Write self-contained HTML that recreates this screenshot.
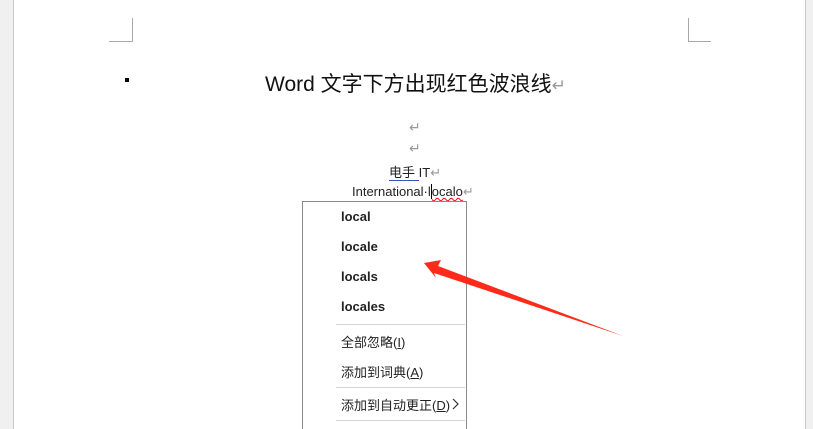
<!DOCTYPE html>
<html style="overflow:hidden;height:429px"><head><meta charset="utf-8"><style>
body{margin:0;width:813px;height:429px;overflow:hidden;background:#fff;position:relative;font-family:"Liberation Sans","Noto Sans CJK SC",sans-serif;}
.g{position:absolute;top:0;height:429px;background:#f0f0f0}
.t{position:absolute;white-space:nowrap;color:#222}
.m{position:absolute;left:341px;font-size:13px;color:#222;white-space:nowrap}
.b{font-weight:bold}
.sep{position:absolute;left:336px;width:129px;height:1px;background:#d5d5d5}
.ret{color:#999}
</style></head><body>
<div class="g" style="left:0;width:13px;border-right:1px solid #c8c8c8"></div>
<div class="g" style="left:805px;width:8px;border-left:1px solid #c8c8c8"></div>
<div style="position:absolute;left:132px;top:18px;width:1px;height:24px;background:#a8a8a8"></div>
<div style="position:absolute;left:109px;top:41px;width:24px;height:1px;background:#a8a8a8"></div>
<div style="position:absolute;left:688px;top:18px;width:1px;height:24px;background:#a8a8a8"></div>
<div style="position:absolute;left:688px;top:41px;width:23px;height:1px;background:#a8a8a8"></div>
<div style="position:absolute;left:125px;top:78px;width:4px;height:4px;background:#000"></div>
<div class="t" style="left:265px;top:68px;font-size:21px;color:#111">Word 文字下方出现红色波浪线<span class="ret" style="font-size:17px">↵</span></div>
<div class="t ret" style="left:409px;top:119px;font-size:14px">↵</div>
<div class="t ret" style="left:409px;top:140px;font-size:14px">↵</div>
<div class="t" style="left:389px;top:162px;font-size:13px"><span style="border-bottom:1px solid #3355bb">电手 </span>IT<span class="ret">↵</span></div>
<div class="t" style="left:352px;top:184px;font-size:13px">International·l<span style="border-left:1px solid #000"></span><span style="text-decoration:underline wavy red;text-decoration-thickness:1px">ocalo</span><span class="ret">↵</span></div>
<div style="position:absolute;left:302px;top:201px;width:163px;height:240px;border:1px solid #8a8a8a;background:#fff"></div>
<div class="m b" style="top:209px">local</div>
<div class="m b" style="top:239px">locale</div>
<div class="m b" style="top:269px">locals</div>
<div class="m b" style="top:299px">locales</div>
<div class="sep" style="top:324px"></div>
<div class="m" style="top:332px">全部忽略(<u>I</u>)</div>
<div class="m" style="top:362px">添加到词典(<u>A</u>)</div>
<div class="sep" style="top:387px"></div>
<div class="m" style="top:395px">添加到自动更正(<u>D</u>)</div>
<svg style="position:absolute;left:452px;top:398px" width="8" height="12"><polyline points="1,1 6,6 1,11" fill="none" stroke="#333" stroke-width="1.2"/></svg>
<div class="sep" style="top:420px"></div>
<svg style="position:absolute;left:0;top:0" width="813" height="429"><polygon points="424,263 441,260 438,266 623,336 434,273 436,278" fill="#ff2a1a"/></svg>
</body></html>
